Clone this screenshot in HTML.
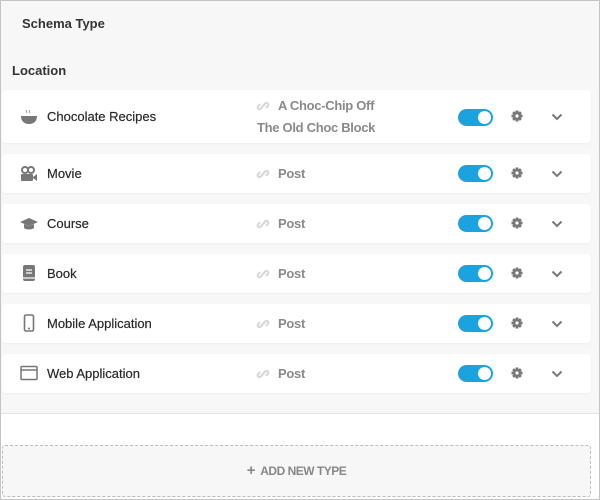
<!DOCTYPE html>
<html><head><style>
*{box-sizing:border-box;margin:0;padding:0}
body{width:600px;height:500px;font-family:"Liberation Sans",sans-serif;background:#fff;position:relative;overflow:hidden}
.frame{position:absolute;left:0;top:0;width:600px;height:500px;border:1px solid #c4c4c4}
.top{position:absolute;left:1px;top:1px;width:598px;height:413px;background:#f7f7f7;border-bottom:1px solid #e2e2e2}
.h1{position:absolute;left:22px;top:16px;font-size:13px;font-weight:bold;color:#333}
.h2{position:absolute;left:12px;top:63px;font-size:13px;font-weight:bold;color:#333}
.row{position:absolute;left:2px;width:589px;background:#fff;border-radius:4px;box-shadow:0 1px 2px rgba(0,0,0,.04)}
.ic{position:absolute;left:18px;width:18px;height:18px}
.name{position:absolute;left:45px;font-size:13px;color:#2a2a2a;-webkit-text-stroke:0.2px #2a2a2a}
.lnk{position:absolute;left:254px;width:14px;height:14px}
.post{position:absolute;left:276px;font-size:13px;color:#8a8a8a;font-weight:bold;letter-spacing:-0.3px}
.tg{position:absolute;left:456px;width:35px;height:17px;border-radius:9px;background:#1ba3e0}
.tg:after{content:"";position:absolute;right:2px;top:2px;width:13px;height:13px;border-radius:50%;background:#fff}
.gear{position:absolute;left:509px;width:12px;height:12px}
.chev{position:absolute;left:549px;width:12px;height:8px}
.add{position:absolute;left:2px;top:445px;width:589px;height:52px;border:1px dashed #bdbdbd;border-radius:3px;background:#f7f7f7;text-align:center;line-height:50px;font-size:12px;color:#888;font-weight:bold;letter-spacing:-0.5px}
</style></head><body>
<div class="top"></div>
<div class="frame"></div>
<div class="h1">Schema Type</div>
<div class="h2">Location</div>

<svg width="0" height="0" style="position:absolute"><defs>
<symbol id="link" viewBox="0 0 16 16"><g fill="none" stroke="#d8d8d8" stroke-width="2.4" stroke-linecap="round"><path d="M7 9.5L5.5 11a2.1 2.1 0 01-3-3L4 6.5"/><path d="M9 6.5L10.5 5a2.1 2.1 0 013 3L12 9.5"/><path d="M6 10l4-4"/></g></symbol>
<symbol id="gear" viewBox="0 0 12 12"><g fill="#777"><circle cx="6" cy="6" r="4"/><rect x="4.6" y="0.5" width="2.8" height="11"/><rect x="0.5" y="4.6" width="11" height="2.8"/><rect x="4.6" y="0.5" width="2.8" height="11" transform="rotate(45 6 6)"/><rect x="4.6" y="0.5" width="2.8" height="11" transform="rotate(-45 6 6)"/></g><circle cx="6" cy="6" r="1.6" fill="#fff"/></symbol>
<symbol id="chev" viewBox="0 0 12 8"><path d="M1.5 1.5L6 6l4.5-4.5" fill="none" stroke="#777" stroke-width="2"/></symbol>
</defs></svg>

<div class="row" style="top:90px;height:53px">
 <svg class="ic" style="top:18px" viewBox="0 0 18 18"><path d="M1 8h16c0 5-3 8-8 8S1 13 1 8z" fill="#777"/><path d="M6 2l1 3M9 2l1 3" stroke="#999" stroke-width="1"/></svg>
 <div class="name" style="top:19px">Chocolate Recipes</div>
 <svg class="lnk" style="top:9px"><use href="#link"/></svg>
 <div class="post" style="top:8px">A Choc-Chip Off</div>
 <div class="post" style="top:30px;left:255px">The Old Choc Block</div>
 <div class="tg" style="top:19px"></div>
 <svg class="gear" style="top:20px"><use href="#gear"/></svg>
 <svg class="chev" style="top:23px"><use href="#chev"/></svg>
</div>

<div class="row" style="top:154px;height:39px">
 <svg class="ic" style="top:11px" viewBox="0 0 18 18"><circle cx="5" cy="5" r="3" fill="none" stroke="#777" stroke-width="2"/><circle cx="11" cy="5" r="3" fill="none" stroke="#777" stroke-width="2"/><rect x="1" y="9" width="12" height="7" rx="1" fill="#777"/><path d="M13 12l4-3v7l-4-3z" fill="#777"/></svg>
 <div class="name" style="top:12px">Movie</div>
 <svg class="lnk" style="top:13px"><use href="#link"/></svg>
 <div class="post" style="top:12px">Post</div>
 <div class="tg" style="top:11px"></div>
 <svg class="gear" style="top:13px"><use href="#gear"/></svg>
 <svg class="chev" style="top:16px"><use href="#chev"/></svg>
</div>

<div class="row" style="top:204px;height:39px">
 <svg class="ic" style="top:11px" viewBox="0 0 18 18"><path d="M0 7l9-4 9 4-9 4z" fill="#777"/><path d="M4 9v4c2 2 8 2 10 0V9l-5 2z" fill="#777"/></svg>
 <div class="name" style="top:12px">Course</div>
 <svg class="lnk" style="top:13px"><use href="#link"/></svg>
 <div class="post" style="top:12px">Post</div>
 <div class="tg" style="top:11px"></div>
 <svg class="gear" style="top:13px"><use href="#gear"/></svg>
 <svg class="chev" style="top:16px"><use href="#chev"/></svg>
</div>

<div class="row" style="top:254px;height:39px">
 <svg class="ic" style="top:10px" viewBox="0 0 18 18"><rect x="3" y="1" width="12" height="16" rx="2" fill="#777"/><path d="M6 6h6M6 9h6" stroke="#fff" stroke-width="1.3"/><path d="M3 14h12" stroke="#fff" stroke-width="1.2"/></svg>
 <div class="name" style="top:12px">Book</div>
 <svg class="lnk" style="top:13px"><use href="#link"/></svg>
 <div class="post" style="top:12px">Post</div>
 <div class="tg" style="top:11px"></div>
 <svg class="gear" style="top:13px"><use href="#gear"/></svg>
 <svg class="chev" style="top:16px"><use href="#chev"/></svg>
</div>

<div class="row" style="top:304px;height:39px">
 <svg class="ic" style="top:10px" viewBox="0 0 18 18"><rect x="4.5" y="1" width="9" height="16" rx="1.5" fill="none" stroke="#777" stroke-width="1.6"/><circle cx="9" cy="14.5" r="1" fill="#777"/></svg>
 <div class="name" style="top:12px">Mobile Application</div>
 <svg class="lnk" style="top:13px"><use href="#link"/></svg>
 <div class="post" style="top:12px">Post</div>
 <div class="tg" style="top:11px"></div>
 <svg class="gear" style="top:13px"><use href="#gear"/></svg>
 <svg class="chev" style="top:16px"><use href="#chev"/></svg>
</div>

<div class="row" style="top:354px;height:39px">
 <svg class="ic" style="top:11px;width:18px;height:16px" viewBox="0 0 18 16"><rect x="1" y="1.5" width="16" height="13" rx="1" fill="none" stroke="#777" stroke-width="1.5"/><path d="M1 5h16" stroke="#777" stroke-width="1.5"/></svg>
 <div class="name" style="top:12px">Web Application</div>
 <svg class="lnk" style="top:13px"><use href="#link"/></svg>
 <div class="post" style="top:12px">Post</div>
 <div class="tg" style="top:11px"></div>
 <svg class="gear" style="top:13px"><use href="#gear"/></svg>
 <svg class="chev" style="top:16px"><use href="#chev"/></svg>
</div>

<div class="add"><span style="font-size:15px;font-weight:bold">+</span>&nbsp; ADD NEW TYPE</div>
</body></html>
